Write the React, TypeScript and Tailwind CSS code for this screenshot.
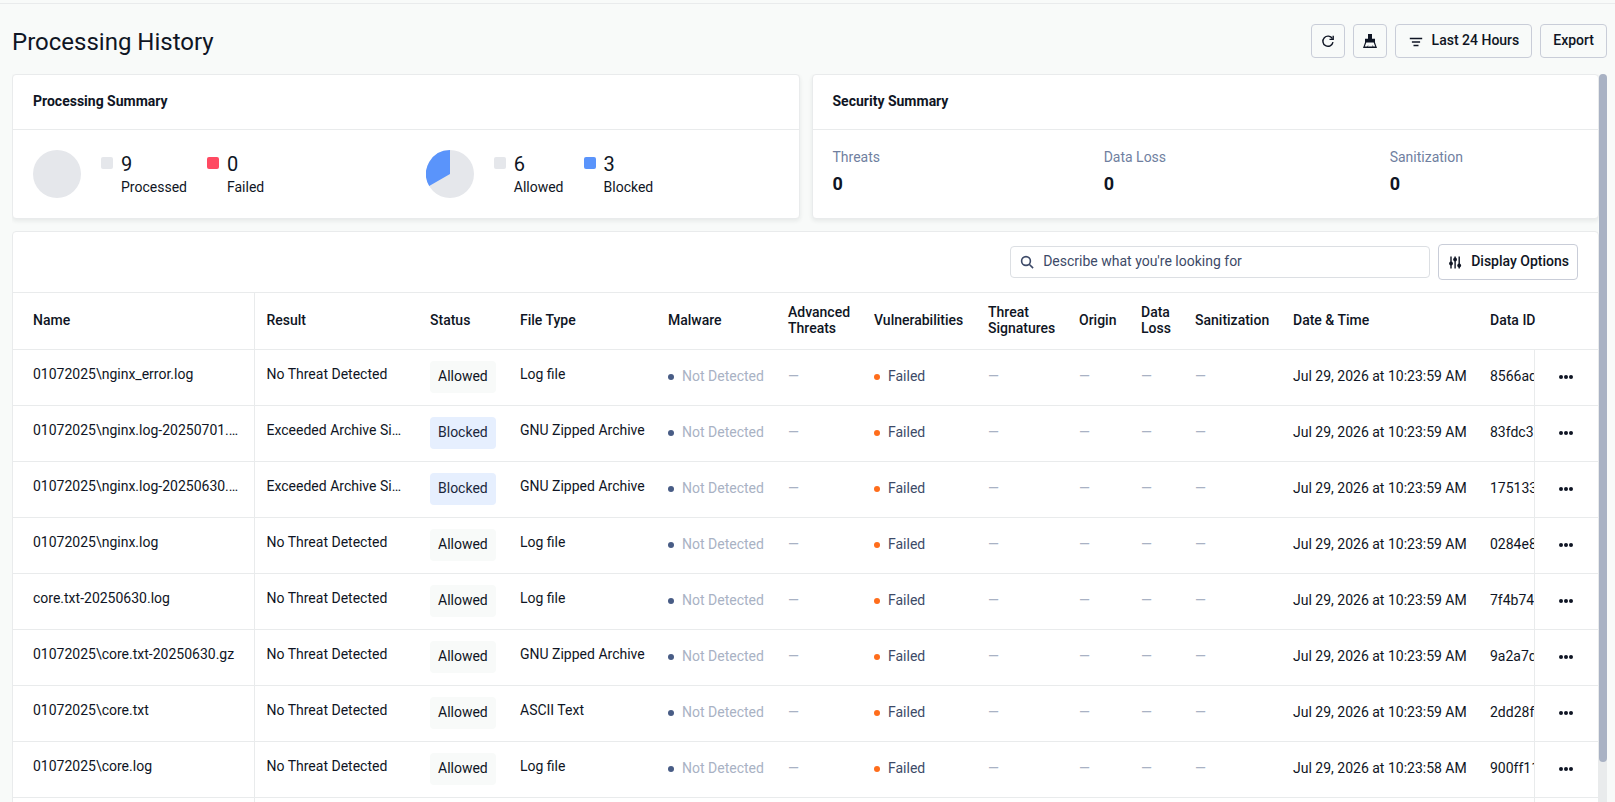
import React from 'react';

const columns = [
  { label: 'Name', width: 'w-[241px]' },
  { label: 'Result', width: 'w-[164px]' },
  { label: 'Status', width: 'w-[90px]' },
  { label: 'File Type', width: 'w-[148px]' },
  { label: 'Malware', width: 'w-[120px]' },
  { label: 'Advanced Threats', width: 'w-[86px]' },
  { label: 'Vulnerabilities', width: 'w-[114px]' },
  { label: 'Threat Signatures', width: 'w-[91px]' },
  { label: 'Origin', width: 'w-[62px]' },
  { label: 'Data Loss', width: 'w-[54px]' },
  { label: 'Sanitization', width: 'w-[98px]' },
  { label: 'Date & Time', width: 'w-[197px]' },
  { label: 'Data ID', width: 'w-[56px]' },
];

const rows = [
  { name: '01072025\\nginx_error.log', result: 'No Threat Detected', status: 'Allowed', type: 'Log file', date: 'Jul 29, 2026 at 10:23:59 AM', id: '8566ad' },
  { name: '01072025\\nginx.log-20250701.gz', result: 'Exceeded Archive Size', status: 'Blocked', type: 'GNU Zipped Archive', date: 'Jul 29, 2026 at 10:23:59 AM', id: '83fdc3' },
  { name: '01072025\\nginx.log-20250630.gz', result: 'Exceeded Archive Size', status: 'Blocked', type: 'GNU Zipped Archive', date: 'Jul 29, 2026 at 10:23:59 AM', id: '175133' },
  { name: '01072025\\nginx.log', result: 'No Threat Detected', status: 'Allowed', type: 'Log file', date: 'Jul 29, 2026 at 10:23:59 AM', id: '0284e8' },
  { name: 'core.txt-20250630.log', result: 'No Threat Detected', status: 'Allowed', type: 'Log file', date: 'Jul 29, 2026 at 10:23:59 AM', id: '7f4b74' },
  { name: '01072025\\core.txt-20250630.gz', result: 'No Threat Detected', status: 'Allowed', type: 'GNU Zipped Archive', date: 'Jul 29, 2026 at 10:23:59 AM', id: '9a2a7d' },
  { name: '01072025\\core.txt', result: 'No Threat Detected', status: 'Allowed', type: 'ASCII Text', date: 'Jul 29, 2026 at 10:23:59 AM', id: '2dd28f' },
  { name: '01072025\\core.log', result: 'No Threat Detected', status: 'Allowed', type: 'Log file', date: 'Jul 29, 2026 at 10:23:58 AM', id: '900ff11' },
];

const RefreshIcon = () => (
  <svg className="w-4 h-4" viewBox="0 0 16 16" fill="none" stroke="currentColor" strokeWidth="1.4">
    <path d="M12.4 5.6A5.1 5.1 0 1 0 13 9.2" />
    <path d="M13.2 2.8v3.6H9.5" />
  </svg>
);

const BroomIcon = () => (
  <svg className="w-4 h-4" viewBox="0 0 16 16">
    <path fill="currentColor" d="M6 1h4v4.8h3v3.6L15 15H1l2-5.6V5.8h3z" />
    <path fill="#f8faf9" d="M4.3 9.4h7.4l1.5 4.2h-1.9l-.5-1.8-.3 1.8H6l.3-1.8-.9 1.8H2.8z" />
  </svg>
);

const FilterIcon = () => (
  <svg className="w-4 h-4" viewBox="0 0 16 16" fill="none" stroke="currentColor" strokeWidth="1.3">
    <path d="M1.8 5.5h12.4M3.9 9h8.2M5.5 12.5h5" />
  </svg>
);

const SearchIcon = () => (
  <svg className="w-4 h-4 text-[#3d4a68]" viewBox="0 0 16 16" fill="none" stroke="currentColor" strokeWidth="1.6">
    <circle cx="7" cy="7" r="4.4" />
    <path d="M10.2 10.2l3.9 3.9" />
  </svg>
);

const SlidersIcon = () => (
  <svg className="w-4 h-4" viewBox="0 0 16 16">
    <path d="M4 2.5v12M8.1 2.5v12M12.2 2.5v12" stroke="currentColor" strokeWidth="1.4" />
    <g fill="currentColor">
      <circle cx="4" cy="9.5" r="1.9" />
      <circle cx="8.1" cy="5.5" r="1.9" />
      <circle cx="12.2" cy="11.5" r="1.9" />
    </g>
  </svg>
);

const MoreIcon = () => (
  <svg className="w-4 h-4" viewBox="0 0 16 16" fill="currentColor">
    <circle cx="3" cy="8" r="2" />
    <circle cx="8" cy="8" r="2" />
    <circle cx="13" cy="8" r="2" />
  </svg>
);

const Pie = ({ blocked }: { blocked?: boolean }) => (
  <svg className="w-12 h-12 shrink-0" viewBox="0 0 48 48">
    <circle cx="24" cy="24" r="24" fill="#e5e7eb" />
    {blocked && <path d="M24 24V0A24 24 0 0 0 3.215 36z" fill="#5a94fb" />}
  </svg>
);

const Legend = ({ color, value, label }: { color: string; value: number; label: string }) => (
  <div className="flex gap-2">
    <span className={`w-3 h-3 mt-[7px] rounded-xs ${color}`} />
    <div>
      <div className="text-xl leading-7">{value}</div>
      <div className="leading-[18px]">{label}</div>
    </div>
  </div>
);

const buttonStyle = 'flex items-center justify-center border border-[#c9cdd8] rounded font-medium whitespace-nowrap';
const cardStyle = 'flex-1 bg-white border border-[#e9ebec] rounded shadow-[0_2px_4px_rgba(20,40,40,0.08)]';
const cardTitleStyle = 'h-[55px] px-5 pb-[2px] flex items-center font-bold border-b border-[#e9ebec]';

const Dash = () => (
  <td className="px-3 pb-1 text-[#a9b2c4]">—</td>
);

const App = () => {
  return (
    <div className="h-screen overflow-hidden flex flex-col bg-[#f8faf9] text-[#0f1524] text-sm font-[Roboto,sans-serif]">
      <div className="h-1 shrink-0 border-b border-[#e9ebec]" />

      {/* Page header */}
      <header className="flex items-center justify-between shrink-0 h-[70px] pl-3 pr-2 pt-1">
        <h1 className="text-2xl pt-[2px]">Processing History</h1>
        <div className="flex gap-2">
          <button aria-label="Refresh" className={`${buttonStyle} w-[34px] h-[34px]`}><RefreshIcon /></button>
          <button aria-label="Clean up" className={`${buttonStyle} w-[34px] h-[34px]`}><BroomIcon /></button>
          <button className={`${buttonStyle} h-[34px] px-3 gap-2`}>
            <FilterIcon />
            <span className="pb-[2px]">Last 24 Hours</span>
          </button>
          <button className={`${buttonStyle} h-[34px] px-3 pb-[2px]`}>Export</button>
        </div>
      </header>

      <div className="flex flex-1 min-h-0 pl-3 pr-2">
        <main className="flex-1 min-w-0 overflow-hidden">
          {/* Summary cards */}
          <div className="flex gap-3 mb-3">
            <section className={cardStyle}>
              <h2 className={cardTitleStyle}>Processing Summary</h2>
              <div className="flex h-[88px]">
                <div className="flex flex-1 gap-5 p-5">
                  <Pie />
                  <Legend color="bg-[#e5e7eb]" value={9} label="Processed" />
                  <Legend color="bg-[#ff4a62]" value={0} label="Failed" />
                </div>
                <div className="flex flex-1 gap-5 p-5">
                  <Pie blocked />
                  <Legend color="bg-[#e5e7eb]" value={6} label="Allowed" />
                  <Legend color="bg-[#5a94fb]" value={3} label="Blocked" />
                </div>
              </div>
            </section>
            <section className={cardStyle}>
              <h2 className={cardTitleStyle}>Security Summary</h2>
              <div className="flex justify-between pl-5 pr-[135px] pt-[17px]">
                {['Threats', 'Data Loss', 'Sanitization'].map((label) => (
                  <div key={label}>
                    <div className="leading-5 text-[#707f9f]">{label}</div>
                    <div className="mt-1 text-lg leading-[26px] font-bold">0</div>
                  </div>
                ))}
              </div>
            </section>
          </div>

          {/* History table */}
          <section className="bg-white border border-[#e9ebec] rounded">
            <div className="flex items-center justify-end gap-2 h-[60px] px-5">
              <label className="flex items-center gap-2 w-[420px] h-8 px-2 border border-[#dcdfe3] rounded">
                <SearchIcon />
                <input
                  type="search"
                  aria-label="Search history"
                  placeholder="Describe what you're looking for"
                  className="flex-1 min-w-0 pb-[2px] outline-none placeholder:text-[#3d4a68]"
                />
              </label>
              <button className={`${buttonStyle} h-9 px-2 gap-2`}>
                <SlidersIcon />
                <span className="pb-[2px]">Display Options</span>
              </button>
            </div>
            <table className="w-full table-fixed border-t border-[#e9ebec]">
              <thead>
                <tr className="h-[57px] border-b border-[#e9ebec]">
                  {columns.map((column, index) => (
                    <th
                      key={column.label}
                      className={`${column.width} pb-[2px] text-left font-medium leading-4 ${
                        index === 0 ? 'pl-5 border-r border-[#e9ebec]' : 'pl-3'
                      } ${column.label === 'Data ID' ? 'whitespace-nowrap' : ''}`}
                    >
                      {column.label}
                    </th>
                  ))}
                  <th className="w-[64px]" aria-label="Actions" />
                </tr>
              </thead>
              <tbody>
                {rows.map((row) => (
                  <tr key={row.name} className="h-14 border-b border-[#e9ebec]">
                    <td className="pl-5 pr-3 pb-2 border-r border-[#e9ebec] truncate">{row.name}</td>
                    <td className="pl-3 pr-4 pb-2 truncate">{row.result}</td>
                    <td className="pl-3 pb-[2px]">
                      <span
                        className={`flex items-center w-fit h-8 px-2 pb-[2px] rounded ${
                          row.status === 'Blocked' ? 'bg-[#e6effe] text-[#1b273c]' : 'bg-[#f8faf9]'
                        }`}
                      >
                        {row.status}
                      </span>
                    </td>
                    <td className="pl-3 pb-2 whitespace-nowrap">{row.type}</td>
                    <td className="pl-3 pb-1 whitespace-nowrap text-[#a9b2c4]">
                      <span className="flex items-center gap-2">
                        <span className="w-[6px] h-[6px] mt-[2px] rounded-full bg-[#485c85]" />
                        Not Detected
                      </span>
                    </td>
                    <Dash />
                    <td className="pl-3 pb-1 text-[#3d4a68]">
                      <span className="flex items-center gap-2">
                        <span className="w-[6px] h-[6px] mt-[2px] rounded-full bg-[#ff6d1b]" />
                        Failed
                      </span>
                    </td>
                    <Dash />
                    <Dash />
                    <Dash />
                    <Dash />
                    <td className="pl-3 pb-1 whitespace-nowrap">{row.date}</td>
                    <td className="pl-3 pb-1 whitespace-nowrap overflow-hidden">{row.id}</td>
                    <td className="pb-[2px] border-l border-[#e9ebec]">
                      <button aria-label="More actions" className="flex mx-auto"><MoreIcon /></button>
                    </td>
                  </tr>
                ))}
                <tr className="h-14">
                  <td className="border-r border-[#e9ebec]" />
                  <td colSpan={12} />
                  <td className="border-l border-[#e9ebec]" />
                </tr>
              </tbody>
            </table>
          </section>
        </main>

        {/* Scroll track */}
        <div className="w-2 shrink-0 rounded-t bg-[#e9ebec]">
          <div className="h-[94.5%] rounded bg-[#a9b2c4]" />
        </div>
      </div>
    </div>
  );
};

export default App;
